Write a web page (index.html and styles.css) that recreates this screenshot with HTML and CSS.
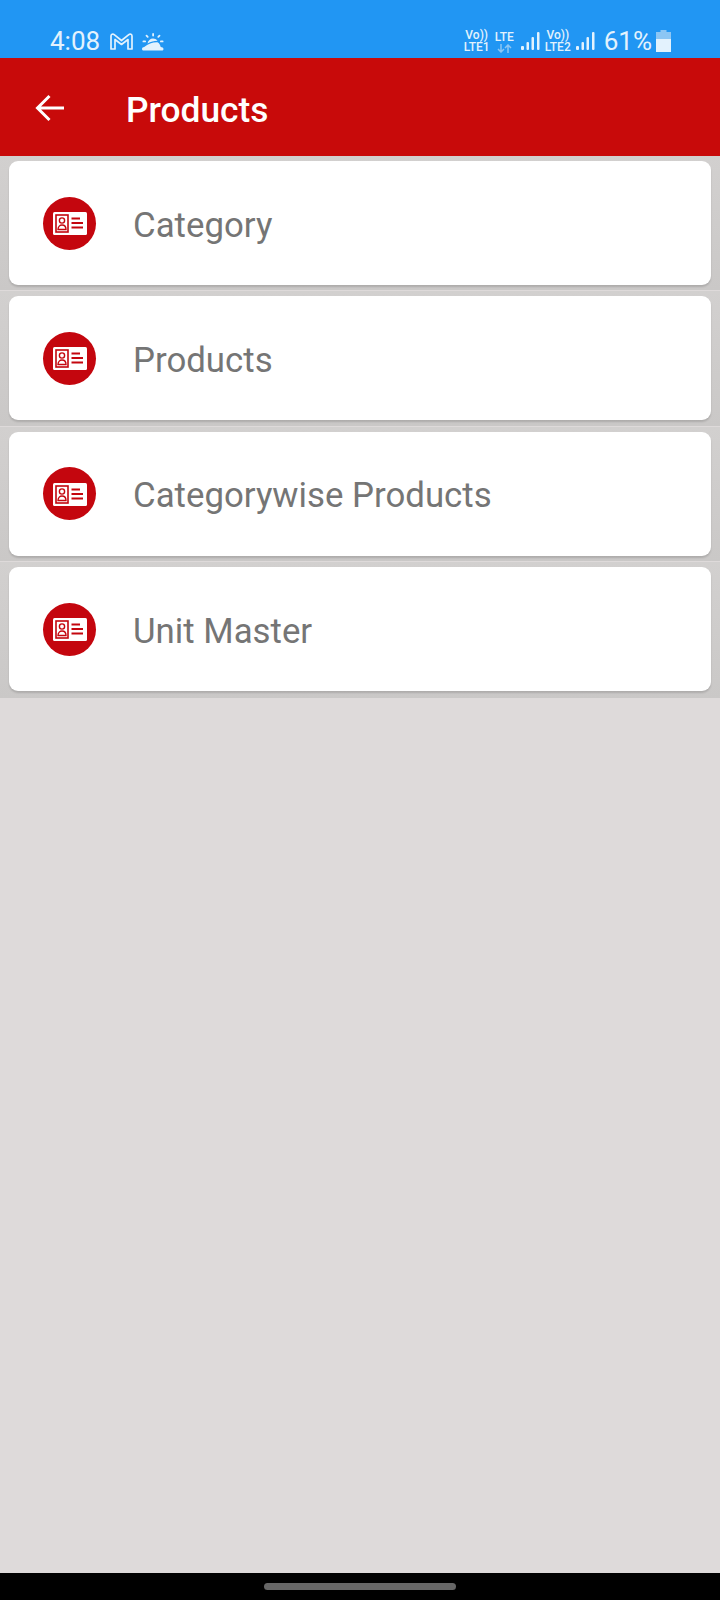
FILE: index.html
```html
<!DOCTYPE html>
<html lang="en">
<head>
  <meta charset="UTF-8" />
  <meta name="viewport" content="width=device-width, initial-scale=1.0"/>
  <title>Products</title>
  <link rel="stylesheet" href="styles.css">
</head>
<body>

  <div class="phone">
    <!-- Status bar -->
    <div class="status-bar">
      <div class="status-left">
        <span class="clock">4:08</span>
        <svg class="gmail-icon" width="23" height="17" viewBox="0 0 23 17" fill="none" stroke="#e3f2fd" stroke-width="1.700" stroke-linejoin="round">
          <path d="M1 16V3C1 1.300 2.800 .5 4.200 1.600L11.500 7.500 18.800 1.600C20.200 .5 22 1.300 22 3V16H18V6.500L11.500 11.500 5 6.500V16Z"/>
        </svg>
        <svg class="weather-icon" width="22" height="19" viewBox="0 0 22 19" fill="#e3f2fd">
          <path d="M5.500 11.500C6 8.500 8.300 6.500 11 6.500 12.800 6.500 14.400 7.300 15.500 8.700 12 8.700 8.800 9.600 5.500 11.500Z"/>
          <path d="M1.500 18.500C.5 18.500 0 17.800 0 17 0 15.800 1 15 2.200 15 6 11.500 11 10 15.500 10.200 17.300 11 18.300 13 18.700 15 20.200 15 21.500 15.800 21.500 17 21.500 17.800 21 18.500 20 18.500Z"/>
          <rect x="10.200" y="1" width="1.800" height="3.500" rx=".9"/>
          <rect x="4.200" y="2.500" width="1.800" height="3.500" rx=".9" transform="rotate(-45 5.100 4.250)"/>
          <rect x="16" y="2.500" width="1.800" height="3.500" rx=".9" transform="rotate(45 16.900 4.250)"/>
          <rect x="0.500" y="8.500" width="3.500" height="1.800" rx=".9"/>
          <rect x="18" y="8.500" width="3.500" height="1.800" rx=".9"/>
        </svg>
      </div>
      <div class="status-right">
        <div class="net-label"><span>Vo))</span><span>LTE1</span></div>
        <div class="net-label net-data">
          <span>LTE</span>
          <svg width="15" height="9" viewBox="0 0 15 9" fill="none" stroke="#8cc6f4" stroke-width="1.500">
            <path d="M4 0V8M1 5 4 8 7 5M11 9V1M8 4 11 1 14 4"/>
          </svg>
        </div>
        <svg class="signal" width="19" height="20" viewBox="0 0 19 20" fill="#e3f2fd">
          <rect x="0" y="15" width="3" height="4" rx="1"/>
          <rect x="5.500" y="11" width="2.500" height="8" rx="1"/>
          <rect x="10.500" y="6" width="2.500" height="13" rx="1"/>
          <rect x="16" y="1" width="2.500" height="18" rx="1"/>
        </svg>
        <div class="net-label"><span>Vo))</span><span>LTE2</span></div>
        <svg class="signal signal-last" width="19" height="20" viewBox="0 0 19 20" fill="#e3f2fd">
          <rect x="0" y="15" width="3" height="4" rx="1"/>
          <rect x="5.500" y="11" width="2.500" height="8" rx="1"/>
          <rect x="10.500" y="6" width="2.500" height="13" rx="1"/>
          <rect x="16" y="1" width="2.500" height="18" rx="1"/>
        </svg>
        <span class="battery-text">61%</span>
        <svg class="battery" width="15" height="22" viewBox="0 0 15 22">
          <path d="M4.500 0H10.500V2H15V9H0V2H4.500Z" fill="#8cc6f4"/>
          <path d="M0 9H15V22H0Z" fill="#e3f2fd"/>
        </svg>
      </div>
    </div>

    <!-- Toolbar -->
    <div class="toolbar">
      <svg class="back-icon" width="29" height="28" viewBox="0 0 29 28" fill="none" stroke="#fff" stroke-width="3">
        <path d="M29 14H3M14.500 2 2.500 14 14.500 26"/>
      </svg>
      <div class="toolbar-title">Products</div>
    </div>

    <!-- Menu list -->
    <div class="menu-list">
      <div class="menu-row">
        <div class="menu-card">
          <div class="menu-icon">
            <svg width="34" height="24" viewBox="0 0 34 24"><use href="#id-card"/></svg>
          </div>
          <div class="menu-label">Category</div>
        </div>
      </div>
      <div class="menu-row">
        <div class="menu-card">
          <div class="menu-icon">
            <svg width="34" height="24" viewBox="0 0 34 24"><use href="#id-card"/></svg>
          </div>
          <div class="menu-label">Products</div>
        </div>
      </div>
      <div class="menu-row">
        <div class="menu-card">
          <div class="menu-icon">
            <svg width="34" height="24" viewBox="0 0 34 24"><use href="#id-card"/></svg>
          </div>
          <div class="menu-label">Categorywise Products</div>
        </div>
      </div>
      <div class="menu-row">
        <div class="menu-card">
          <div class="menu-icon">
            <svg width="34" height="24" viewBox="0 0 34 24"><use href="#id-card"/></svg>
          </div>
          <div class="menu-label">Unit Master</div>
        </div>
      </div>
    </div>

    <div class="empty-space"></div>

    <!-- Nav bar -->
    <div class="nav-bar"><div class="nav-pill"></div></div>
  </div>

  <svg class="icon-defs" width="0" height="0">
    <defs>
      <g id="id-card">
        <rect x="0" y="1" width="34" height="23" rx="1.500" fill="#fff"/>
        <rect x="3" y="4" width="12" height="17" fill="none" stroke="#c4060e" stroke-width="1.600"/>
        <circle cx="9" cy="9.500" r="2.600" fill="none" stroke="#c4060e" stroke-width="1.400"/>
        <path d="M5 18.500C5 15.500 7 14 9 14 11 14 13 15.500 13 18.500Z" fill="none" stroke="#c4060e" stroke-width="1.400"/>
        <path d="M18.500 7.500H27M18.500 12H30M18.500 16.500H30" stroke="#c4060e" stroke-width="1.900"/>
      </g>
    </defs>
  </svg>

</body>
</html>
```

FILE: styles.css
```css
html, body {
  margin: 0;
  padding: 0;
}

body {
  font-family: Roboto, sans-serif;
  background: #dedada;
}

.phone {
  width: 720px;
  height: 1600px;
  display: flex;
  flex-direction: column;
  overflow: hidden;
}

.status-bar {
  height: 58px;
  box-sizing: border-box;
  background: #2196f3;
  color: #e3f2fd;
  display: flex;
  justify-content: space-between;
  align-items: center;
  padding: 24px 49px 0 50px;
}

.status-left,
.status-right {
  display: flex;
  align-items: center;
}

.clock {
  font-size: 26px;
  margin-right: 10px;
}

.gmail-icon {
  margin-right: 9px;
}

.net-label {
  display: flex;
  flex-direction: column;
  align-items: center;
  font-size: 12px;
  font-weight: 500;
  line-height: 12px;
  margin-right: 5px;
}

.net-data {
  margin-right: 7px;
  line-height: 14px;
}

.signal {
  margin-right: 5px;
}

.signal-last {
  margin-right: 9px;
}

.battery-text {
  font-size: 26px;
  margin-right: 4px;
}

.toolbar {
  height: 98px;
  box-sizing: border-box;
  background: #c80a0a;
  color: #fff;
  display: flex;
  align-items: center;
  padding: 2px 0 0 35px;
}

.back-icon {
  margin-right: 62px;
}

.toolbar-title {
  font-size: 35.300px;
  font-weight: 500;
  padding-top: 3px;
}

.menu-list {
  display: flex;
  flex-direction: column;
}

.menu-row {
  height: 135.400px;
  box-sizing: border-box;
  padding: 5px 9px 5px 9px;
  background: linear-gradient(#d2d0cf, #cac8c7);
  border-bottom: 1px solid #dedada;
}

.menu-row:last-child {
  border-bottom: none;
}

.menu-card {
  height: 124px;
  background: #fff;
  border-radius: 9px;
  box-shadow: 0 2px 2px rgba(0, 0, 0, 0.14);
  display: flex;
  align-items: center;
  padding-left: 34px;
}

.menu-icon {
  width: 53px;
  height: 53px;
  border-radius: 50%;
  background: #c4060e;
  display: flex;
  align-items: center;
  justify-content: center;
  margin-right: 37px;
}

.menu-label {
  font-size: 34.800px;
  color: #757575;
  padding-top: 3px;
}

.empty-space {
  flex: 1;
}

.nav-bar {
  height: 27px;
  background: #000;
  display: flex;
  justify-content: center;
  padding-top: 10px;
  box-sizing: border-box;
}

.nav-pill {
  width: 192px;
  height: 7px;
  border-radius: 4px;
  background: #666;
}

.icon-defs {
  position: absolute;
}
```
